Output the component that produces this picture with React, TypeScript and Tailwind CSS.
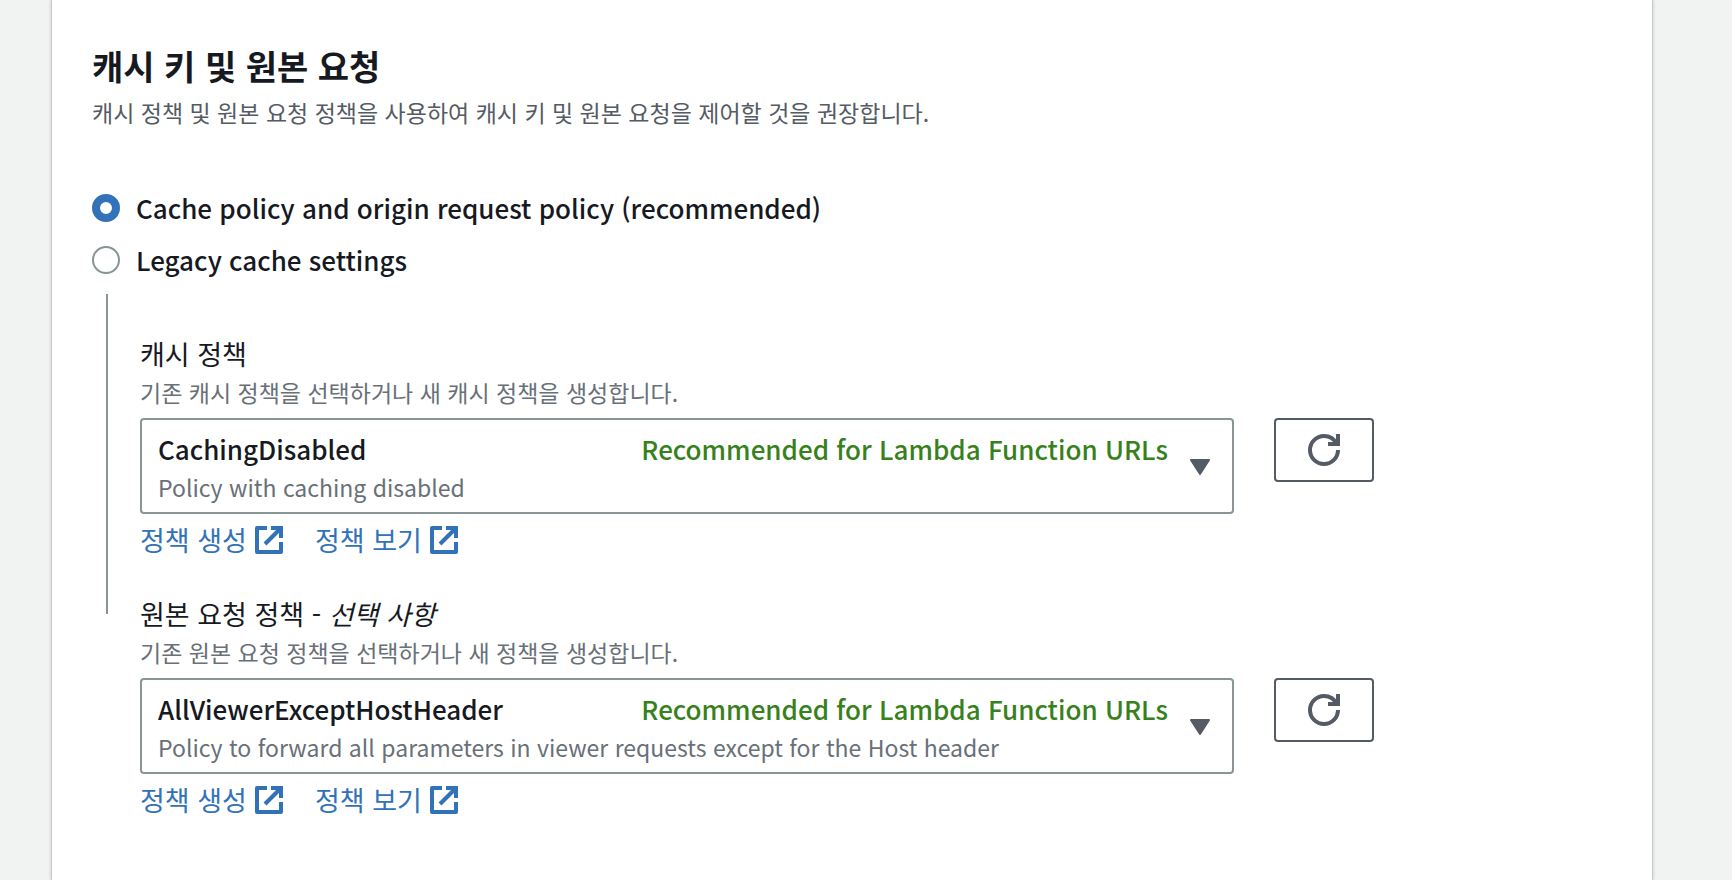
const fontStack = "font-['Noto_Sans_CJK_KR','Noto_Sans',sans-serif]";

function ExternalIcon() {
  return (
    <svg viewBox="1 1 14 14" className="size-7 shrink-0" fill="none" stroke="currentColor" strokeWidth="2" aria-hidden="true">
      <path d="M9 2h5v5" />
      <path d="M6 10l8-8" />
      <path d="M7 2H2v12h12V9" strokeLinejoin="round" />
    </svg>
  );
}

function RefreshIcon() {
  return (
    <svg viewBox="0 0 16 16" className="size-8" fill="none" stroke="currentColor" strokeWidth="2" aria-hidden="true">
      <path d="M15 8c0 3.87-3.13 7-7 7s-7-3.13-7-7 3.13-7 7-7c2.79 0 5.2 1.63 6.33 4" />
      <path d="M15 0v5h-5" />
    </svg>
  );
}

function PolicyLink({ children }: { children: string }) {
  return (
    <a href="#" className="flex items-center gap-2 text-[27px] leading-9 text-[#3172b9]">
      {children}
      <ExternalIcon />
    </a>
  );
}

type FieldProps = {
  id: string;
  label: string;
  optional?: string;
  hint: string;
  value: string;
  description: string;
};

function PolicyField({ id, label, optional, hint, value, description }: FieldProps) {
  return (
    <div>
      <label htmlFor={id} className="block text-[27px] leading-10 text-[#16191f]">
        {label}
        {optional && (
          <>
            {" - "}
            <i>{optional}</i>
          </>
        )}
      </label>
      <p id={`${id}-hint`} className="text-[23px] leading-9 text-[#687078]">{hint}</p>
      <div className="mt-2 grid grid-cols-12 items-start gap-x-10">
        <button
          id={id}
          type="button"
          aria-haspopup="listbox"
          aria-describedby={`${id}-hint`}
          className="col-span-9 flex items-center gap-[22px] rounded-sm border-2 border-[#879596] pt-[9px] pr-[22px] pb-[7px] pl-4 text-left"
        >
          <span className="min-w-0 flex-1">
            <span className="flex justify-between text-[26px] leading-10 font-medium text-[#16191f]">
              <span>{value}</span>
              <span className="text-[#37811c]">Recommended for Lambda Function URLs</span>
            </span>
            <span className="block text-[23px] leading-9 text-[#687078]">{description}</span>
          </span>
          <svg viewBox="0 0 20 16" className="h-4 w-5 shrink-0 text-[#545b64]" fill="currentColor" stroke="currentColor" strokeWidth="2" strokeLinejoin="round" aria-hidden="true">
            <path d="M1 1h18l-9 14z" />
          </svg>
        </button>
        <button
          type="button"
          aria-label="새로 고침"
          className="flex h-16 w-[100px] items-center justify-center rounded-sm border-2 border-[#545b64] text-[#545b64]"
        >
          <RefreshIcon />
        </button>
      </div>
      <div className="mt-2 flex gap-8">
        <PolicyLink>정책 생성</PolicyLink>
        <PolicyLink>정책 보기</PolicyLink>
      </div>
    </div>
  );
}

function RadioOption({ label, checked }: { label: string; checked?: boolean }) {
  return (
    <label className="flex items-center gap-4 text-[26px] leading-10 font-medium text-[#16191f]">
      <input
        type="radio"
        name="cache-mode"
        defaultChecked={checked}
        className="size-7 shrink-0 appearance-none rounded-full border-2 border-[#879596] bg-white checked:border-8 checked:border-[#3172b9]"
      />
      {label}
    </label>
  );
}

export default function App() {
  return (
    <div className={`min-h-screen bg-[#f1f3f3] pr-20 pl-[52px] ${fontStack}`} lang="ko">
      <main className="min-h-screen bg-white px-10 pt-10 pb-10 shadow-[0_0_0_1px_#c4c8cb,0_0_4px_rgba(0,28,36,0.3)]">
        <h2 className="text-[34px] leading-[52px] font-bold text-[#16191f]">캐시 키 및 원본 요청</h2>
        <p className="mt-0.5 text-[23px] leading-9 text-[#545b64]">
          캐시 정책 및 원본 요청 정책을 사용하여 캐시 키 및 원본 요청을 제어할 것을 권장합니다.
        </p>
        <fieldset className="mt-[58px] flex flex-col gap-3">
          <RadioOption label="Cache policy and origin request policy (recommended)" checked />
          <RadioOption label="Legacy cache settings" />
        </fieldset>
        <div className="mt-3.5 ml-3.5 flex items-start gap-8">
          <div className="h-80 w-0.5 shrink-0 bg-[#879596]" />
          <div className="flex flex-1 flex-col gap-9 pt-10">
            <PolicyField
              id="cache-policy"
              label="캐시 정책"
              hint="기존 캐시 정책을 선택하거나 새 캐시 정책을 생성합니다."
              value="CachingDisabled"
              description="Policy with caching disabled"
            />
            <PolicyField
              id="origin-policy"
              label="원본 요청 정책"
              optional="선택 사항"
              hint="기존 원본 요청 정책을 선택하거나 새 정책을 생성합니다."
              value="AllViewerExceptHostHeader"
              description="Policy to forward all parameters in viewer requests except for the Host header"
            />
          </div>
        </div>
      </main>
    </div>
  );
}
